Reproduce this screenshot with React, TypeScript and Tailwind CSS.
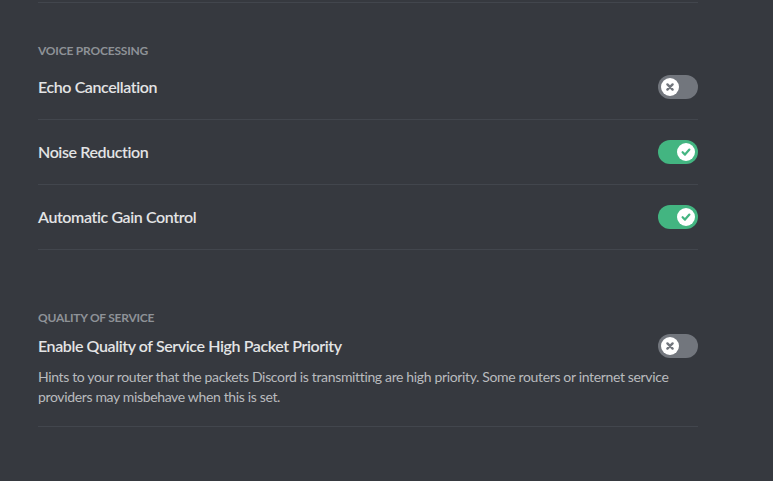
import React from "react";

const font = { fontFamily: "Lato, 'Noto Sans', sans-serif" };

function Toggle({ on }: { on: boolean }) {
  return (
    <div
      className={
        "relative h-6 w-10 shrink-0 rounded-full " +
        (on ? "bg-[#43b581]" : "bg-[#72767d]")
      }
    >
      <div
        className={
          "absolute top-[3px] flex h-[18px] w-[18px] items-center justify-center rounded-full bg-white " +
          (on ? "right-[3px]" : "left-[3px]")
        }
      >
        {on ? (
          <svg width="12" height="12" viewBox="0 0 12 12">
            <path
              d="M2.6 6.2 L5 8.6 L9.4 3.6"
              fill="none"
              stroke="#43b581"
              strokeWidth="2.2"
              strokeLinecap="round"
              strokeLinejoin="round"
            />
          </svg>
        ) : (
          <svg width="12" height="12" viewBox="0 0 12 12">
            <path
              d="M3.4 3.4 L8.6 8.6 M8.6 3.4 L3.4 8.6"
              fill="none"
              stroke="#72767d"
              strokeWidth="2.4"
              strokeLinecap="round"
            />
          </svg>
        )}
      </div>
    </div>
  );
}

function Row({ title, on }: { title: string; on: boolean }) {
  return (
    <div>
      <div className="flex h-6 items-center justify-between">
        <span className="text-[16px] font-semibold leading-6 tracking-[-0.4px] text-[#e3e4e5]">{title}</span>
        <Toggle on={on} />
      </div>
      <div className="mt-5 h-px bg-[#42464d]" />
    </div>
  );
}

export default function App() {
  return (
    <div className="min-h-[481px] w-full bg-[#36393f]" style={font}>
      <div className="ml-[38px] w-[660px] pt-[2px]">
        <div className="h-px bg-[#42464d]" />
        <div className="mt-10 mb-4 text-[12px] font-bold uppercase leading-4 tracking-[-0.2px] text-[#8e9297]">
          Voice Processing
        </div>
        <div className="flex flex-col gap-5">
          <Row title="Echo Cancellation" on={false} />
          <Row title="Noise Reduction" on={true} />
          <Row title="Automatic Gain Control" on={true} />
        </div>
        <div className="mt-[60px] mb-2 text-[12px] font-bold uppercase leading-4 tracking-[-0.25px] text-[#8e9297]">
          Quality of Service
        </div>
        <div className="flex h-6 items-center justify-between">
          <span className="text-[16px] font-semibold leading-6 tracking-[-0.4px] text-[#e3e4e5]">
            Enable Quality of Service High Packet Priority
          </span>
          <Toggle on={false} />
        </div>
        <div className="mt-[9px] whitespace-nowrap text-[14px] leading-5 tracking-[-0.35px] text-[#b9bbbe]">
          Hints to your router that the packets Discord is transmitting are high priority. Some routers or internet service
          <br />
          providers may misbehave when this is set.
        </div>
        <div className="mt-[19px] h-px bg-[#42464d]" />
      </div>
    </div>
  );
}
